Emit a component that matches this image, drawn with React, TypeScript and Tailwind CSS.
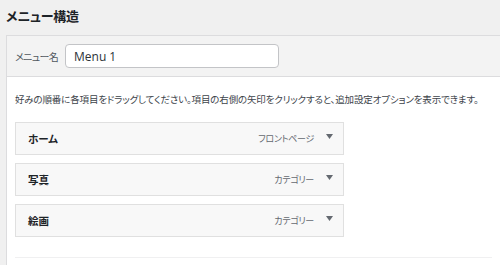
import React from "react";

const items = [
  { title: "ホーム", type: "フロントページ" },
  { title: "写真", type: "カテゴリー" },
  { title: "絵画", type: "カテゴリー" },
];

const App = () => {
  return (
    <div
      className="w-[500px] h-[265px] bg-[#f0f0f0] overflow-hidden flex flex-col text-[#3c434a] [font-feature-settings:'palt']"
      style={{ fontFamily: '"Noto Sans CJK JP", "Noto Sans", sans-serif' }}
    >
      <h2 className="h-[35px] pl-[6px] pt-[6px] text-[13px] leading-[20px] tracking-[-0.2px] font-bold text-[#1d2327]">
        メニュー構造
      </h2>
      <div className="ml-[6px] flex-1 flex flex-col bg-white border-l border-t border-[#dcdcde]">
        <div className="h-[41px] bg-[#f3f3f3] border-b border-[#dcdcde] flex items-center pl-[8px]">
          <span className="w-[50px] whitespace-nowrap text-[10px] tracking-[-0.6px] text-[#50575e]">
            メニュー名
          </span>
          <input
            className="w-[214px] h-[24px] rounded-[4px] border border-[#c3c4c7] bg-white px-[8px] text-[12px] text-[#2c3338] outline-none"
            style={{ fontFamily: '"Open Sans", "Noto Sans", sans-serif' }}
            defaultValue="Menu 1"
          />
        </div>
        <div className="flex flex-col px-[8px]">
          <p className="pt-[14px] h-[45px] text-[9.5px] tracking-[-0.15px] leading-[16px] text-[#3c434a] whitespace-nowrap">
            好みの順番に各項目をドラッグしてください。項目の右側の矢印をクリックすると、追加設定オプションを表示できます。
          </p>
          <div className="flex flex-col gap-[8px]">
            {items.map((item) => (
              <div
                key={item.title}
                className="w-[329px] h-[33px] border border-[#e0e0e0] bg-[#f8f8f8] flex items-center pl-[12px] pr-[10px]"
              >
                <span className="text-[10.5px] font-bold text-[#1d2327] flex-1">{item.title}</span>
                <span className="text-[9px] tracking-[-0.3px] text-[#646970]">{item.type}</span>
                <svg width="7" height="5" viewBox="0 0 7 5" className="ml-[12px] mb-[5px]">
                  <path d="M0 0 H7 L3.5 5 Z" fill="#646970" />
                </svg>
              </div>
            ))}
          </div>
          <div className="mt-[20px] border-t border-[#f0f0f1]" />
        </div>
      </div>
    </div>
  );
};

export default App;
